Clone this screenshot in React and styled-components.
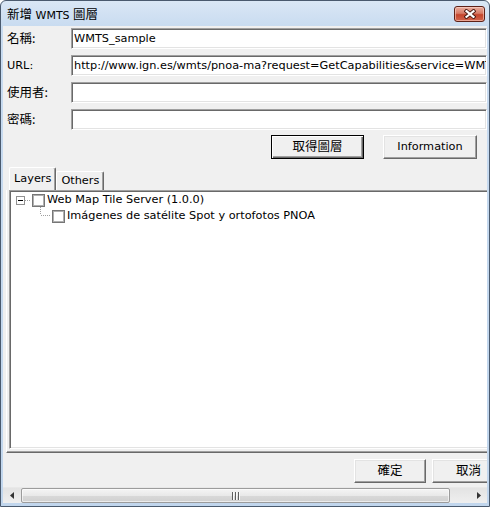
import React from "react";
import styled, { createGlobalStyle } from "styled-components";

const GlobalStyle = createGlobalStyle`
  html, body {
    margin: 0;
    padding: 0;
    background: #ffffff;
  }
  body {
    font-family: "DejaVu Sans", "Noto Sans CJK TC", sans-serif;
    font-size: 11.3px;
    color: #000;
  }
  * {
    box-sizing: border-box;
  }
`;

const Window = styled.div`
  width: 490px;
  height: 507px;
  display: flex;
  flex-direction: column;
  border: 1px solid #4a5a6e;
  border-radius: 6px 6px 0 0;
  padding: 0 2px 3px 2px;
  background: linear-gradient(#dae7f5, #c8dbf0 26px, #c1d6ed);
  overflow: hidden;
`;

const TitleBar = styled.div`
  flex: none;
  height: 25px;
  display: flex;
  align-items: flex-start;
  justify-content: space-between;
  padding-left: 4px;
`;

const Title = styled.span`
  margin-top: 6px;
  line-height: 14px;
  font-size: 11px;
  color: #000;
`;

const Han = styled.span`
  font-family: "Noto Sans CJK TC", sans-serif;
  font-size: 12.5px;
`;

const CloseButton = styled.div`
  width: 31px;
  height: 16px;
  margin: 5px 2px 0 0;
  border: 1px solid #5e2117;
  border-radius: 3px;
  background: linear-gradient(#e9ad9e, #d77b66 45%, #c4452c 55%, #d2654d);
  box-shadow: inset 0 0 0 1px rgba(255, 220, 210, 0.55);
  display: flex;
  align-items: center;
  justify-content: center;
`;

const Client = styled.div`
  flex: 1;
  min-height: 0;
  display: flex;
  flex-direction: column;
  background: #f0f0f0;
  overflow: hidden;
`;

const Viewport = styled.div`
  flex: 1;
  min-height: 0;
  overflow: hidden;
`;

const Content = styled.div`
  width: 507px;
  height: 100%;
  display: flex;
  flex-direction: column;
`;

const Form = styled.div`
  display: grid;
  grid-template-columns: 68px 1fr;
  row-gap: 6px;
  padding: 2px 23px 0 0;
`;

const Label = styled.label`
  align-self: center;
  padding-left: 4px;
  line-height: 16px;
  white-space: nowrap;
`;

const Field = styled.input`
  width: 100%;
  height: 21px;
  margin: 0;
  padding: 0 0 0 2px;
  border: 1px solid;
  border-color: #a0a0a0 #ffffff #ffffff #a0a0a0;
  box-shadow: inset 1px 1px #696969, inset -1px -1px #e3e3e3;
  background: #fff;
  color: #000;
  font: 11.3px "DejaVu Sans", "Noto Sans CJK TC", sans-serif;
  outline: none;
`;

const ButtonRow = styled.div`
  display: flex;
  gap: ${(p) => p.$gap}px;
  padding-left: ${(p) => p.$left}px;
  margin-top: ${(p) => p.$top}px;
  padding-bottom: ${(p) => p.$bottom || 0}px;
`;

const Button = styled.button`
  flex: none;
  width: ${(p) => p.$w}px;
  height: 24px;
  margin: 0;
  padding: 0;
  background: #f0f0f0;
  border: 1px solid;
  border-color: ${(p) => (p.$default ? "#000" : "#fff #696969 #696969 #fff")};
  box-shadow: ${(p) =>
    p.$default
      ? "inset 1px 1px #fff, inset -1px -1px #696969, inset -2px -2px #a0a0a0"
      : "inset -1px -1px #a0a0a0, inset 1px 1px #e3e3e3"};
  color: #000;
  font: 11.3px "DejaVu Sans", "Noto Sans CJK TC", sans-serif;
  line-height: 20px;
`;

const TabStrip = styled.div`
  display: flex;
  align-items: flex-end;
  height: 23px;
  margin-top: 8px;
  padding-left: 6px;
`;

const Tab = styled.div`
  height: ${(p) => (p.$active ? 23 : 19)}px;
  padding: 0 4px;
  display: flex;
  align-items: center;
  justify-content: center;
  border-top: 1px solid #fff;
  border-left: 1px solid #fff;
  border-right: 1px solid #696969;
  box-shadow: inset -1px 0 #a0a0a0;
  border-radius: 2px 2px 0 0;
  background: #f0f0f0;
  line-height: 14px;
`;

const TabPanel = styled.div`
  flex: 1;
  min-height: 0;
  display: flex;
  flex-direction: column;
  margin-left: 3px;
  border-left: 1px solid #fff;
  border-bottom: 1px solid #696969;
  box-shadow: inset 0 -1px #a0a0a0;
  padding: 0 0 3px 2px;
`;

const Tree = styled.div`
  flex: 1;
  background: #fff;
  border: 1px solid;
  border-color: #a0a0a0 #ffffff #ffffff #a0a0a0;
  box-shadow: inset 1px 1px #696969, inset -1px -1px #e3e3e3;
  padding: 1px 0 0 1px;
`;

const TreeRow = styled.div`
  display: flex;
  align-items: center;
  height: 16px;
  padding-left: ${(p) => p.$level * 20}px;
`;

const Check = styled.span`
  flex: none;
  width: 13px;
  height: 13px;
  margin-left: 1px;
  border: 1px solid #767676;
  box-shadow: inset 0 0 0 1px #b0b0b0;
  background: #fff;
`;

const TreeLabel = styled.span`
  margin-left: 2px;
  line-height: 16px;
  white-space: nowrap;
`;

const ScrollBar = styled.div`
  flex: none;
  height: 16px;
  display: flex;
  align-items: stretch;
  background: linear-gradient(#e3e3e3, #efefef);
  border-top: 1px solid #e8e8e8;
`;

const ArrowCell = styled.div`
  flex: none;
  width: ${(p) => p.$w}px;
  display: flex;
  align-items: center;
  justify-content: center;
`;

const Thumb = styled.div`
  flex: none;
  width: 429px;
  margin: 0 0 0 1px;
  border: 1px solid #9c9c9c;
  border-radius: 2px;
  background: linear-gradient(#f4f4f4, #e9e9e9 50%, #d9d9d9 51%, #d0d0d0);
  box-shadow: inset 0 0 0 1px rgba(255, 255, 255, 0.6);
  display: flex;
  align-items: center;
  justify-content: center;
`;

const Spacer = styled.div`
  flex: 1;
`;

const Expander = () => (
  <svg width="20" height="16" viewBox="0 0 20 16" style={{ flex: "none" }}>
    <rect x="5.5" y="4.5" width="8" height="8" fill="#fff" stroke="#919191" />
    <line x1="7" y1="8.5" x2="12" y2="8.5" stroke="#000" />
    <line x1="14" y1="8.5" x2="20" y2="8.5" stroke="#a0a0a0" strokeDasharray="1 1" />
  </svg>
);

const Connector = () => (
  <svg width="20" height="16" viewBox="0 0 20 16" overflow="visible" style={{ flex: "none" }}>
    <line x1="9.5" y1="-1" x2="9.5" y2="7" stroke="#a0a0a0" strokeDasharray="1 1" />
    <line x1="10" y1="7.5" x2="20" y2="7.5" stroke="#a0a0a0" strokeDasharray="1 1" />
  </svg>
);

const CloseGlyph = () => (
  <svg width="12" height="10" viewBox="-6 -5 12 10">
    <path d="M-3.5 -2.8 L3.5 2.8 M3.5 -2.8 L-3.5 2.8" stroke="#4a1a12" strokeWidth="4" strokeLinecap="square" />
    <path d="M-3.5 -2.8 L3.5 2.8 M3.5 -2.8 L-3.5 2.8" stroke="#fff" strokeWidth="2.2" strokeLinecap="square" />
  </svg>
);

const Arrow = ({ dir }) => (
  <svg width="4" height="7" viewBox="0 0 4 7">
    <polygon points={dir === "left" ? "4,0 0,3.5 4,7" : "0,0 4,3.5 0,7"} fill="#333" />
  </svg>
);

const Grip = () => (
  <svg width="8" height="8" viewBox="0 0 8 8">
    {[0.5, 3.5, 6.5].map((x) => (
      <g key={x}>
        <line x1={x} y1="0" x2={x} y2="8" stroke="#5f5f5f" />
        <line x1={x + 1} y1="0" x2={x + 1} y2="8" stroke="#fafafa" />
      </g>
    ))}
  </svg>
);

const fields = [
  { label: <Han>名稱:</Han>, value: "WMTS_sample" },
  { label: "URL:", value: "http://www.ign.es/wmts/pnoa-ma?request=GetCapabilities&service=WMTS" },
  { label: <Han>使用者:</Han>, value: "" },
  { label: <Han>密碼:</Han>, value: "" },
];

export default function App() {
  return (
    <>
      <GlobalStyle />
      <Window>
        <TitleBar>
          <Title>
            <Han>新增</Han> WMTS <Han>圖層</Han>
          </Title>
          <CloseButton>
            <CloseGlyph />
          </CloseButton>
        </TitleBar>
        <Client>
          <Viewport>
            <Content>
              <Form>
                {fields.map((f, i) => (
                  <React.Fragment key={i}>
                    <Label>{f.label}</Label>
                    <Field readOnly value={f.value} />
                  </React.Fragment>
                ))}
              </Form>
              <ButtonRow $gap={19} $left={268} $top={5}>
                <Button $w={93} $default>
                  <Han>取得圖層</Han>
                </Button>
                <Button $w={94}>Information</Button>
              </ButtonRow>
              <TabStrip>
                <Tab $active>Layers</Tab>
                <Tab>Others</Tab>
              </TabStrip>
              <TabPanel>
                <Tree>
                  <TreeRow $level={0}>
                    <Expander />
                    <Check />
                    <TreeLabel>Web Map Tile Server (1.0.0)</TreeLabel>
                  </TreeRow>
                  <TreeRow $level={1}>
                    <Connector />
                    <Check />
                    <TreeLabel>Imágenes de satélite Spot y ortofotos PNOA</TreeLabel>
                  </TreeRow>
                </Tree>
              </TabPanel>
              <ButtonRow $gap={6} $left={351} $top={6} $bottom={4}>
                <Button $w={72}>
                  <Han>確定</Han>
                </Button>
                <Button $w={73}>
                  <Han>取消</Han>
                </Button>
              </ButtonRow>
            </Content>
          </Viewport>
          <ScrollBar>
            <ArrowCell $w={17}>
              <Arrow dir="left" />
            </ArrowCell>
            <Thumb>
              <Grip />
            </Thumb>
            <Spacer />
            <ArrowCell $w={17}>
              <Arrow dir="right" />
            </ArrowCell>
          </ScrollBar>
        </Client>
      </Window>
    </>
  );
}
